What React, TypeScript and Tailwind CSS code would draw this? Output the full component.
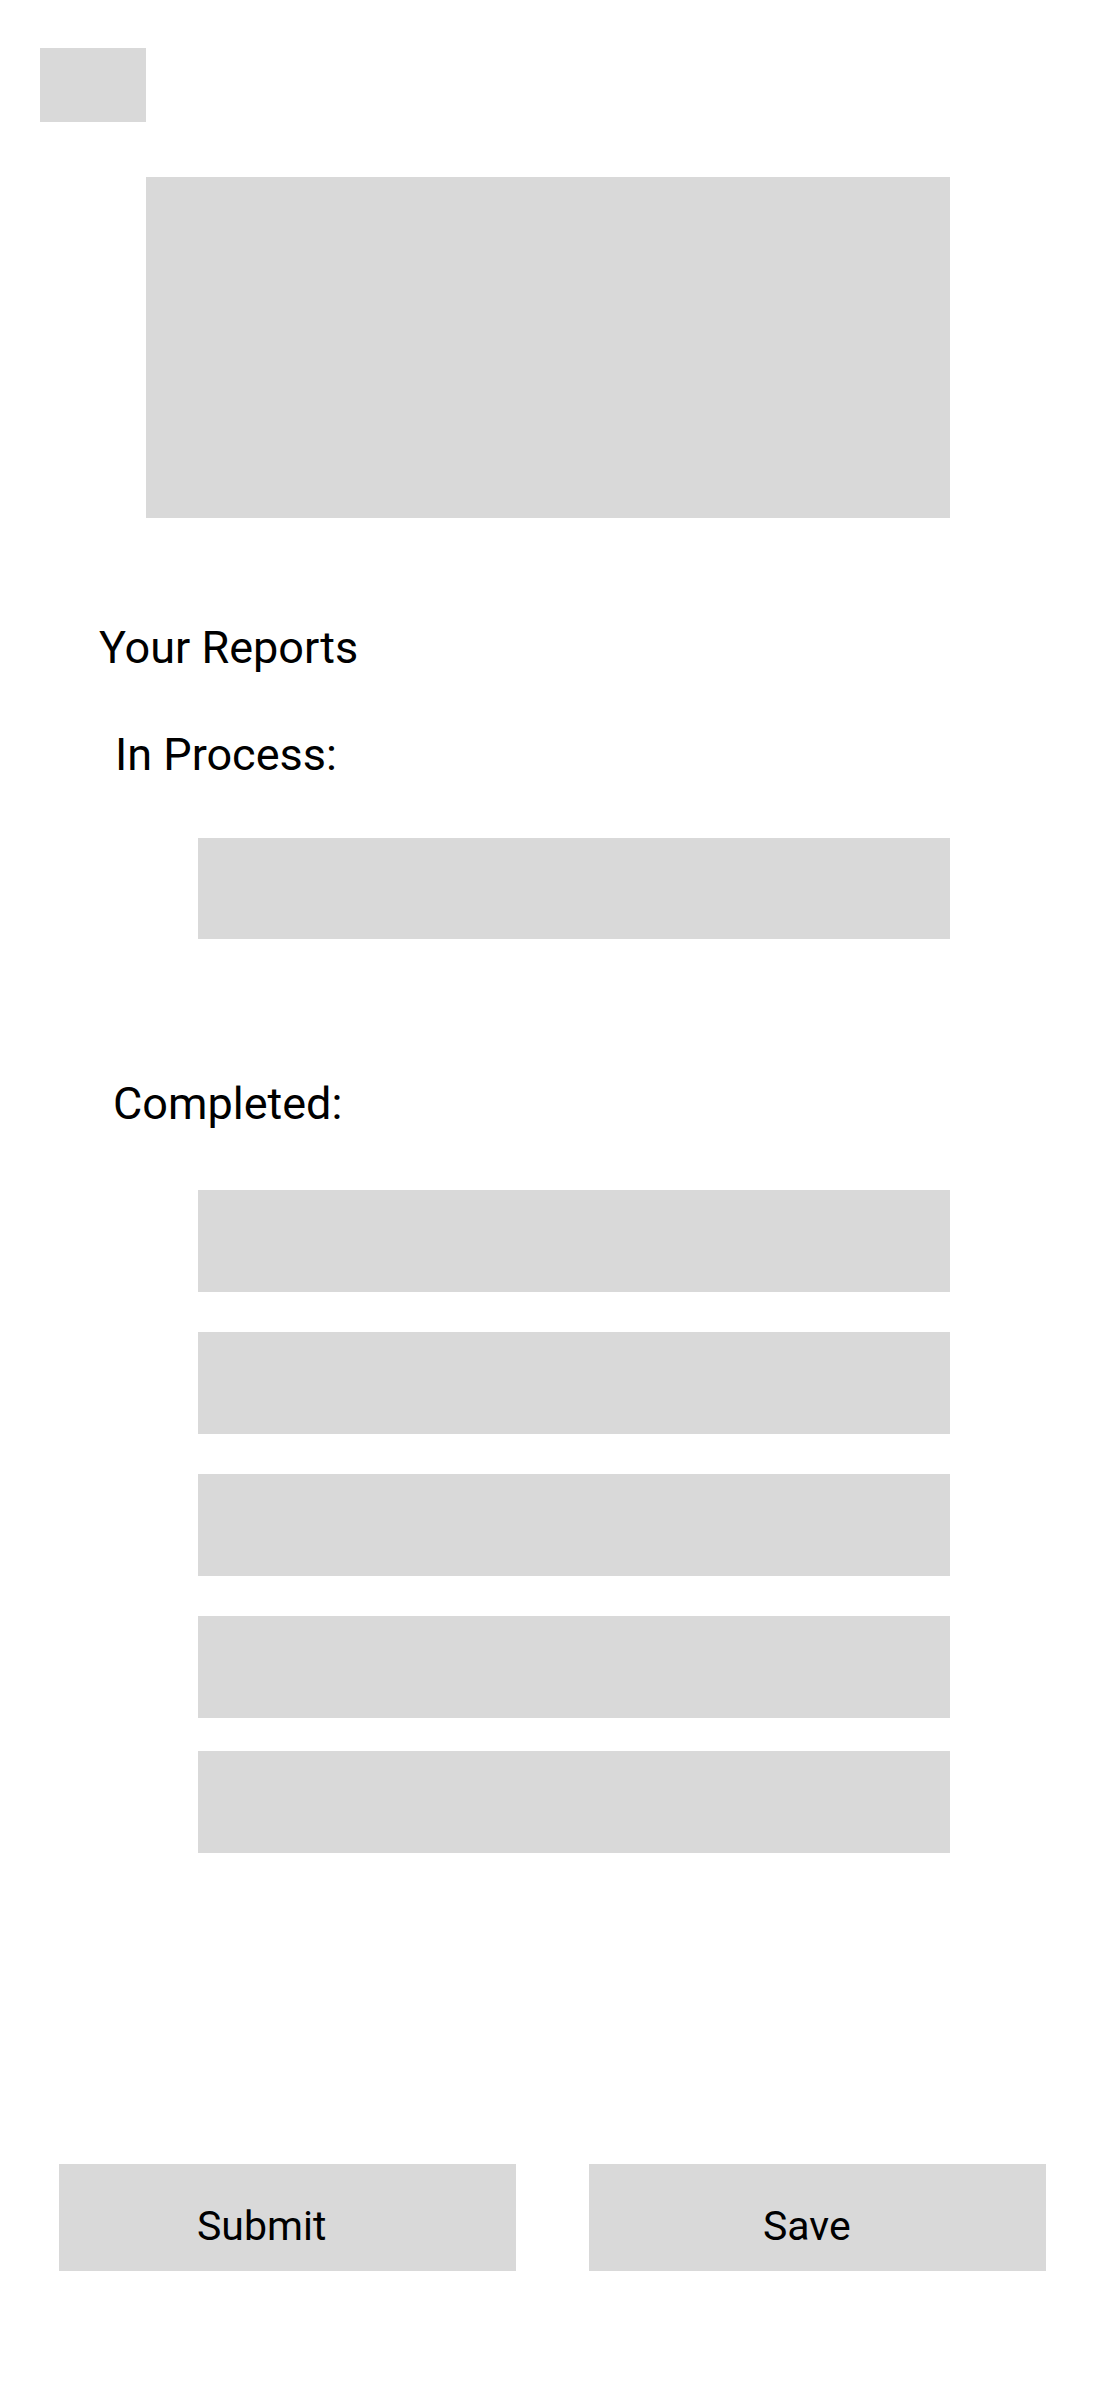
const completed = [1, 2, 3, 4, 5];

export default function App() {
  return (
    <div className="min-h-[2381px] bg-white text-black" style={{ fontFamily: 'Roboto, "Noto Sans", sans-serif' }}>
      {/* top bar: logo placeholder + banner */}
      <div className="pt-[48px] pl-[40px]">
        <div className="h-[74px] w-[106px] bg-[#d9d9d9]" />
      </div>
      <div className="mt-[55px] ml-[146px] h-[341px] w-[804px] bg-[#d9d9d9]" />

      <section className="mt-[104px]">
        <h1 className="ml-[99px] text-[45px] leading-[52px] font-normal">Your Reports</h1>

        <h2 className="mt-[55px] ml-[115px] text-[45px] leading-[52px] font-normal">In Process:</h2>
        <div className="mt-[57px] ml-[198px] h-[101px] w-[752px] bg-[#d9d9d9]" />

        <h2 className="mt-[139px] ml-[113px] text-[45px] leading-[52px] font-normal">Completed:</h2>
        <div className="mt-[60px] ml-[198px] flex w-[752px] flex-col">
          {completed.map((n, i) => (
            <div
              key={n}
              className={i === 0 ? 'h-[102px] bg-[#d9d9d9]' : i === 4 ? 'mt-[33px] h-[102px] bg-[#d9d9d9]' : 'mt-[40px] h-[102px] bg-[#d9d9d9]'}
            />
          ))}
        </div>
      </section>

      <div className="mt-[311px] ml-[59px] flex gap-[73px]">
        <button className="flex h-[107px] w-[457px] items-center bg-[#d9d9d9] pt-[19px] pl-[138px] text-[41px] text-black">
          Submit
        </button>
        <button className="flex h-[107px] w-[457px] items-center bg-[#d9d9d9] pt-[19px] pl-[174px] text-[41px] text-black">
          Save
        </button>
      </div>
    </div>
  );
}
